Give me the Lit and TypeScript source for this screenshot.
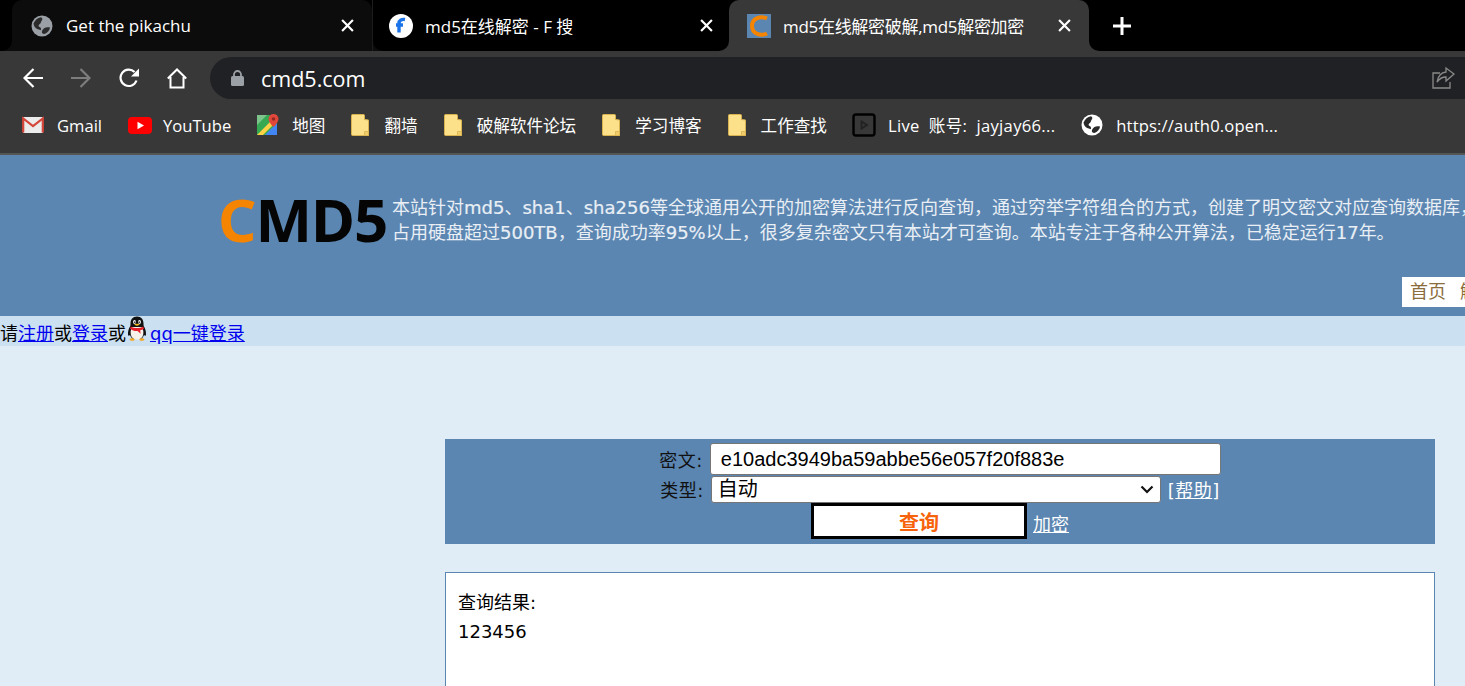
import { LitElement, html, css, svg } from "lit";
import { customElement } from "lit/decorators.js";

const globe = (cls: string) => svg`<svg class=${cls} viewBox="0 0 22 22"><circle cx="11" cy="11" r="10.5" fill="currentColor"/><path fill="#2b2b2b" d="M2.500 8.500C4 5 6.500 2.800 10 2.200c1.500.8 1.800 2 .8 3.200-1.200 1.300-.6 2.600-2 3.600-1.500 1-1.600 2.400-.2 3 1.300.6 1.800 1.800 1.200 3.200-2.800-.6-5-1.600-6.200-3.400-.6-1-.8-2-1.100-3.300zM13.500 13c1.500-1 3.600-1 5.600-.4-.6 3-2.800 5.400-5.600 6.400-2-.3-3-1.200-2.600-2.600.3-1.400 1.400-2.400 2.600-3.400z"/></svg>`;

const folder = svg`<svg class="ic folder" viewBox="0 0 18 22"><path d="M.5 1.500a1 1 0 0 1 1-1h11a1 1 0 0 1 1 1v4l4 .5v15.500h-16a1 1 0 0 1-1-1z" fill="#fde08a" stroke="#d8b24e"/><path d="M13.500 21.500v-4h4v4z" fill="#f0cc6a" stroke="#d8b24e" stroke-width=".8"/></svg>`;

const gmail = svg`<svg class="ic gmail" viewBox="0 0 22 18"><rect x="1" y="1" width="20" height="16" rx="1" fill="#ececec"/><path d="M1.200 16.500V2.500L11 10l9.800-7.500v14" fill="none" stroke="#d4463a" stroke-width="2.200"/></svg>`;

const youtube = svg`<svg class="ic yt" viewBox="0 0 24 17"><rect width="24" height="17" rx="4" fill="#f00"/><path d="M9.500 4.800v7.400l6.500-3.700z" fill="#fff"/></svg>`;

const maps = svg`<svg class="ic maps" viewBox="0 0 22 22"><rect y="1" width="20" height="20" fill="#35a852"/><path d="M0 21 20 1v6L6 21z" fill="#fbd146"/><path d="M8 21 20 9v12z" fill="#4285f4"/><path d="M0 1h10L0 11z" fill="#7cc48b"/><path d="M16.500 0a5 5 0 0 0-5 5c0 3.500 5 8 5 8s5-4.500 5-8a5 5 0 0 0-5-5z" fill="#e0473a"/><circle cx="16.500" cy="5" r="1.700" fill="#8f2a22"/></svg>`;

const live = svg`<svg class="ic live" viewBox="0 0 24 24"><rect x="1.500" y="1.500" width="21" height="21" rx="2.500" fill="none" stroke="#000" stroke-width="2.400"/><path d="M9.500 8.500v7l5.500-3.500z" fill="none" stroke="#222" stroke-width="1.800"/></svg>`;

const close = svg`<svg class="x" viewBox="0 0 12 12"><path d="M1 1l10 10M11 1 1 11" stroke="#fff" stroke-width="2" fill="none"/></svg>`;

const penguin = svg`<svg class="qq" viewBox="0 0 22 26"><path d="M11 .5c-4.300 0-6.500 3-6.500 7 0 1 0 2-.3 2.800C3 12 1.800 15 2 18.500c.1 1.400 1 1.500 2 .5.500 1.500 1.300 2.800 2.500 3.800h9c1.200-1 2-2.300 2.500-3.800 1 1 1.900.9 2-.5.200-3.500-1-6.500-2.200-8.200-.3-.8-.3-1.800-.3-2.800 0-4-2.200-7-6.500-7z" fill="#111"/><path d="M6 11c-1.500 3-2 6.500-.5 9.500 1 2 3 3 5.500 3s4.500-1 5.500-3c1.500-3 1-6.500-.5-9.500z" fill="#f6f2ea"/><path d="M4.800 10.500c3.500 2 9 2 12.400 0l.8 2c-1 1-2.500 1.500-3.800 1.800l.4 3.500-3-2.800c-2.600.3-5.300-.4-7.500-2.300z" fill="#e5202a"/><ellipse cx="8.500" cy="6" rx="1.400" ry="2" fill="#fff"/><ellipse cx="13.500" cy="6" rx="1.400" ry="2" fill="#fff"/><ellipse cx="8.800" cy="6.300" rx=".6" ry="1" fill="#000"/><ellipse cx="13.200" cy="6.300" rx=".6" ry="1" fill="#000"/><path d="M8 8.500c1.500-1 4.500-1 6 0-1.500 1.500-4.500 1.500-6 0z" fill="#f5b81f"/><path d="M3.500 23.500c1-1.500 3.500-1.800 5-.5.500.900-.500 1.800-2 1.800-1.500 0-3-.3-3-1.300zM18.500 23.500c-1-1.500-3.500-1.800-5-.5-.500.900.500 1.800 2 1.800 1.500 0 3-.3 3-1.300z" fill="#f5a81f"/></svg>`;

const bookmarks: [unknown, string, string][] = [
  [gmail, "Gmail", ""],
  [youtube, "YouTube", ""],
  [maps, "地图", ""],
  [folder, "翻墙", ""],
  [folder, "破解软件论坛", ""],
  [folder, "学习博客", ""],
  [folder, "工作查找", ""],
  [live, "Live  账号:  jayjay66...", "wide"],
  [globe("ic globe"), "https://auth0.open...", "wide2"],
];

@customElement("app-root")
export class AppRoot extends LitElement {
  static styles = css`
    :host {
      display: block;
      width: 1465px;
      height: 686px;
      overflow: hidden;
      background: #e1edf6;
      font-family: "DejaVu Sans", "Noto Sans CJK SC", sans-serif;
      font-size: 18px;
      color: #000;
    }
    .chrome {
      font-family: "Open Sans", "Noto Sans CJK SC", sans-serif;
      color: #fff;
      background: #383838;
      border-bottom: 2px solid #555;
    }
    .strip { display: flex; height: 51px; background: #000; }
    .lead { width: 12px; background: #0c0c0c; }
    .lead-fill { height: 100%; background: #000; border-bottom-right-radius: 10px; }
    .tab {
      box-sizing: border-box;
      width: 360px;
      display: flex;
      align-items: center;
      font-size: 17px;
      white-space: nowrap;
    }
    .tab .name { flex: 1; }
    .t1 { background: #0c0c0c; border-radius: 10px 10px 0 0; padding: 0 18px 0 19px; gap: 13px; }
    .t1 .fav { width: 22px; height: 22px; }
    .gap1 { width: 1px; background: #1c1c1c; }
    .t2-wrap { background: linear-gradient(to right, #0c0c0c 50%, #383838 50%); }
    .t2 { width: 356px; height: 100%; background: #000; border-radius: 0 0 10px 10px; padding: 0 16px; gap: 12px; }
    .t3 { background: #383838; border-radius: 10px 10px 0 0; padding: 0 18px; gap: 12px; }
    .t3 .name { letter-spacing: -0.300px; }
    .tail { flex: 1; background: #383838; }
    .tail-fill { height: 100%; background: #000; border-bottom-left-radius: 10px; display: flex; align-items: center; padding-left: 23px; }
    .fav { width: 24px; height: 24px; flex: none; color: #9aa0a6; }
    .x { width: 13px; height: 13px; flex: none; }
    .plus { width: 20px; height: 20px; }
    .toolbar { display: flex; align-items: center; height: 54px; padding: 0 0 0 23px; box-sizing: border-box; gap: 28px; }
    .nav { width: 20px; height: 22px; flex: none; }
    .omni {
      flex: 1;
      height: 42px;
      margin-left: -5px;
      background: #202124;
      border-radius: 21px 0 0 21px;
      display: flex;
      align-items: center;
      padding: 0 10px 0 21px;
      font-size: 21.500px;
      gap: 17px;
    }
    .omni .url { flex: 1; }
    .lock { width: 13px; height: 16px; }
    .share { width: 24px; height: 24px; }
    .marks { display: flex; align-items: center; height: 48px; padding: 0 0 8px 22px; box-sizing: border-box; gap: 26px; font-size: 16.600px; }
    .mark { display: flex; align-items: center; gap: 13px; white-space: pre; }
    .wide { letter-spacing: 0.300px; }
    .wide2 { letter-spacing: 0.150px; }
    .ic { flex: none; display: block; }
    .gmail { width: 22px; height: 18px; }
    .yt { width: 24px; height: 17px; margin-right: -2px; }
    .maps { width: 22px; height: 22px; }
    .folder { width: 18px; height: 22px; margin-right: 2px; }
    .live { width: 24px; height: 24px; margin: 0 -1px 0 -1px; }
    .globe { width: 22px; height: 22px; color: #fff; }

    .head { height: 161px; background: #5b86b1; box-sizing: border-box; padding-top: 31px; overflow: hidden; }
    .brand { display: flex; align-items: center; padding-left: 218px; white-space: nowrap; }
    .logo { flex: none; font-family: "Noto Sans", sans-serif; font-weight: 700; font-size: 60px; line-height: 70px; width: 174px; letter-spacing: -1px; color: #050505; margin-top: -2px; }
    .logo b { color: #f58400; font-weight: 700; }
    .intro { flex: none; color: #e9eff5; line-height: 25px; font-size: 18px; }
    .lat { -webkit-text-stroke: 0.200px #e9eff5; }
    .menu { display: flex; gap: 14px; margin: 23px 0 0 1402px; width: 120px; height: 30px; line-height: 30px; background: #fff; color: #8a6d3b; padding-left: 8px; white-space: nowrap; }

    .login { height: 30px; background: #cbe0f0; display: flex; align-items: flex-end; white-space: nowrap; line-height: 24px; box-sizing: border-box; }
    a { color: #00e; text-decoration: underline; }
    .qq { width: 22px; height: 26px; margin-right: 2px; align-self: flex-start; }

    .main { padding: 93px 30px 0 445px; }
    .panel { height: 105px; background: #5b86b1; color: #111; display: flex; flex-direction: column; align-items: center; padding-top: 4px; box-sizing: border-box; }
    .row { display: flex; align-items: center; justify-content: center; }
    .panel a { color: #fff; }
    .r1 { height: 32px; gap: 7px; }
    .r2 { height: 28px; gap: 7px; }
    .r3 { height: 36px; gap: 6px; }
    .r3 a { margin-top: 3px; }
    .lbl { letter-spacing: 0.500px; }
    .pw {
      box-sizing: border-box; width: 511px; height: 32px; padding: 0 10px;
      font: 20px "Liberation Sans", sans-serif; color: #000;
      border: 1px solid #767676; border-radius: 3px; background: #fff;
    }
    .sel {
      box-sizing: border-box; width: 450px; height: 27px; padding: 0 0 0 6px;
      appearance: none;
      font: 20px "Liberation Sans", "Noto Sans CJK SC", sans-serif; color: #000;
      border: 1px solid #767676; border-radius: 3px;
      background: #fff url("data:image/svg+xml,%3Csvg xmlns='http://www.w3.org/2000/svg' width='14' height='9'%3E%3Cpath d='M1.500 1.500 7 7l5.500-5.500' fill='none' stroke='%23111' stroke-width='2.200'/%3E%3C/svg%3E") no-repeat right 6px center;
    }
    .help { color: #fff; letter-spacing: 0.500px; }
    .go {
      box-sizing: border-box; width: 216px; height: 36px; border: 3px solid #000; background: #fff;
      color: #f7630c; font: 700 20px "DejaVu Sans", "Noto Sans CJK SC", sans-serif; padding: 0 0 0 0;
    }
    .result { margin-top: 28px; height: 200px; background: #fff; border: 1px solid #5b86b1; padding: 15px 12px; }
    .result div { line-height: 29px; }
  `;

  render() {
    return html`
      <div class="chrome">
        <div class="strip">
          <div class="lead"><div class="lead-fill"></div></div>
          <div class="tab t1">
            ${globe("fav")}<span class="name">Get the pikachu</span>${close}
          </div>
          <div class="gap1"></div>
          <div class="t2-wrap">
            <div class="tab t2">
              <svg class="fav" viewBox="0 0 24 24"><circle cx="12" cy="12" r="12" fill="#fff"/><path d="M16 5.500c-3 -.5-6 .5-6 4v9M7 11h7" stroke="#1a73e8" stroke-width="3.400" fill="none"/></svg>
              <span class="name">md5在线解密 - F 搜</span>${close}
            </div>
          </div>
          <div class="tab t3">
            <svg class="fav" viewBox="0 0 24 24"><rect width="24" height="24" fill="#5b86b1"/><path d="M20 4.500C14 1.500 5 4 5 12s9 10.500 15 7.500" stroke="#f58400" stroke-width="4" fill="none"/></svg>
            <span class="name">md5在线解密破解,md5解密加密</span>${close}
          </div>
          <div class="tail">
            <div class="tail-fill">
              <svg class="plus" viewBox="0 0 20 20"><path d="M10 1v18M1 10h18" stroke="#fff" stroke-width="3"/></svg>
            </div>
          </div>
        </div>
        <div class="toolbar">
          <svg class="nav" viewBox="0 0 20 22"><path d="M20 11H2M10.500 2 1.500 11l9 9" stroke="#fff" stroke-width="2.200" fill="none"/></svg>
          <svg class="nav" viewBox="0 0 20 22"><path d="M0 11h18M9.500 2l9 9-9 9" stroke="#7d7d7d" stroke-width="2.200" fill="none"/></svg>
          <svg class="nav" viewBox="0 0 20 22"><path d="M17.500 13.500A8.200 8.200 0 1 1 15.600 5" stroke="#fff" stroke-width="2.200" fill="none"/><path d="M20 1.500v8h-8z" fill="#fff"/></svg>
          <svg class="nav" viewBox="0 0 20 22"><path d="M.8 11.500 10 2.500l9.200 9M3.500 10v10.500h13V10" stroke="#fff" stroke-width="2" fill="none"/></svg>
          <div class="omni">
            <svg class="lock" viewBox="0 0 13 16"><path d="M3 7V4.500a3.500 3.500 0 0 1 7 0V7" stroke="#9aa0a6" stroke-width="1.800" fill="none"/><rect y="6" width="13" height="10" rx="1.500" fill="#9aa0a6"/></svg>
            <span class="url">cmd5.com</span>
            <svg class="share" viewBox="0 0 24 24"><path d="M9 7H2v15h17v-6" stroke="#8a8a8a" stroke-width="1.300" fill="none"/><path d="M15 2v4c-5 .5-8 4-9 10 2.500-3.500 5-5 9-5v4l8-7z" stroke="#8a8a8a" stroke-width="1.300" fill="none"/></svg>
          </div>
        </div>
        <div class="marks">
          ${bookmarks.map(([icon, label, cls]) => html`<div class="mark">${icon}<span class=${cls}>${label}</span></div>`)}
        </div>
      </div>
      <div class="head">
        <div class="brand">
          <div class="logo"><b>C</b>MD5</div>
          <div class="intro">
            本站针对<span class="lat">md5</span>、<span class="lat">sha1</span>、<span class="lat">sha256</span>等全球通用公开的加密算法进行反向查询&#xFF0C;通过穷举字符组合的方式&#xFF0C;创建了明文密文对应查询数据库&#xFF0C;<br />
            占用硬盘超过<span class="lat">500TB</span>&#xFF0C;查询成功率<span class="lat">95%</span>以上&#xFF0C;很多复杂密文只有本站才可查询。本站专注于各种公开算法&#xFF0C;已稳定运行<span class="lat">17</span>年。
          </div>
        </div>
        <div class="menu"><span>首页</span><span>解密</span></div>
      </div>
      <div class="login">
        <span>请</span><a href="#">注册</a><span>或</span><a href="#">登录</a><span>或</span>${penguin}<a href="#">qq一键登录</a>
      </div>
      <div class="main">
        <div class="panel">
          <div class="row r1">
            <span class="lbl">密文:</span>
            <input class="pw" value="e10adc3949ba59abbe56e057f20f883e" />
          </div>
          <div class="row r2">
            <span class="lbl">类型:</span>
            <select class="sel"><option>自动</option></select>
            <span class="help">[<a href="#">帮助</a>]</span>
          </div>
          <div class="row r3">
            <button class="go">查询</button>
            <a href="#">加密</a>
          </div>
        </div>
        <div class="result">
          <div>查询结果:</div>
          <div>123456</div>
        </div>
      </div>
    `;
  }
}
